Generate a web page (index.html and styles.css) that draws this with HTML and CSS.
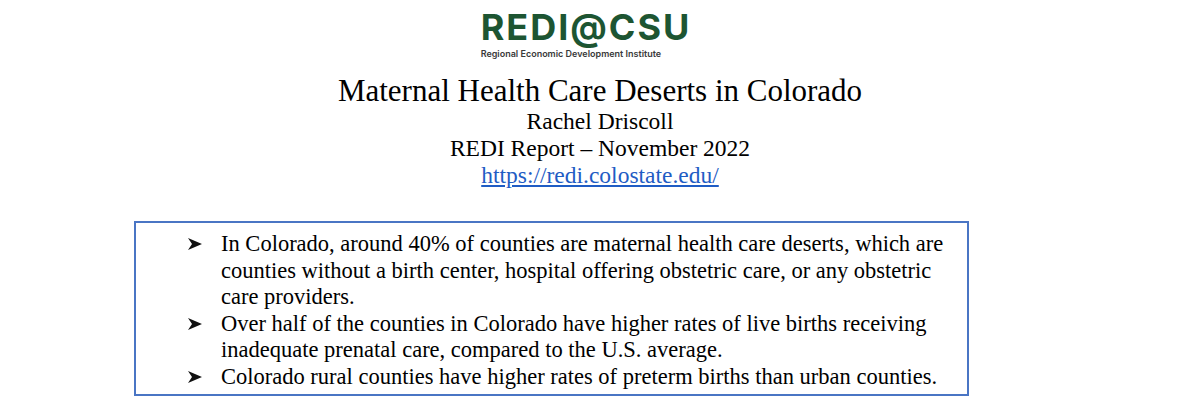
FILE: index.html
```html
<!DOCTYPE html>
<html>
<head>
<meta charset="utf-8">
<link rel="stylesheet" href="styles.css">
</head>
<body>
<header class="logo-wrap">
  <div class="logo">
    <div class="logo-main">REDI@CSU</div>
    <div class="logo-sub">Regional Economic Development Institute</div>
  </div>
</header>
<section class="titles">
  <h1 class="title">Maternal Health Care Deserts in Colorado</h1>
  <p class="line">Rachel Driscoll</p>
  <p class="line">REDI Report – November 2022</p>
  <p class="line"><a class="link" href="#">https://redi.colostate.edu/</a></p>
</section>
<section class="box">
  <ul class="points">
    <li class="point"><svg class="arrow" viewBox="0 0 14 12"><polygon points="0,0 14,6 0,12 4,6" fill="#111"/></svg><span class="text">In Colorado, around 40% of counties are maternal health care deserts, which are counties without a birth center, hospital offering obstetric care, or any obstetric care providers.</span></li>
    <li class="point"><svg class="arrow" viewBox="0 0 14 12"><polygon points="0,0 14,6 0,12 4,6" fill="#111"/></svg><span class="text">Over half of the counties in Colorado have higher rates of live births receiving inadequate prenatal care, compared to the U.S. average.</span></li>
    <li class="point"><svg class="arrow" viewBox="0 0 14 12"><polygon points="0,0 14,6 0,12 4,6" fill="#111"/></svg><span class="text">Colorado rural counties have higher rates of preterm births than urban counties.</span></li>
  </ul>
</section>
</body>
</html>
```
FILE: styles.css
```css
html, body { margin: 0; padding: 0; background: #fff; }
body { width: 1200px; height: 415px; overflow: hidden; font-family: "Liberation Serif", "Times New Roman", serif; color: #000; }

.logo-wrap { display: flex; justify-content: center; padding-right: 28px; padding-top: 12px; }
.logo { display: flex; flex-direction: column; }
.logo-main { font-family: "Inter", sans-serif; font-weight: 700; font-size: 36px; line-height: 30px; color: #1d5532; letter-spacing: 2px; }
.logo-sub { font-family: "Inter", sans-serif; font-weight: 600; font-size: 9px; line-height: 12px; color: #3a3a3a; margin-top: 6px; }

.titles { text-align: center; margin-top: 14px; }
.title { font-weight: normal; font-size: 31px; line-height: 34px; margin: 0; }
.line { font-size: 23.5px; line-height: 27px; margin: 0; }
.link { color: #1f5cc4; text-decoration: underline; }

.box { margin: 32px 0 0 134px; width: 835px; height: 175px; box-sizing: border-box; border: 2px solid #4a75c4; }
.points { list-style: none; margin: 0; padding: 8px 0 0 52px; }
.point { display: flex; align-items: flex-start; font-size: 22.5px; line-height: 26.5px; }
.text { max-width: 735px; }
.arrow { width: 14px; height: 12px; flex: none; margin: 7px 19px 0 0; }
```
